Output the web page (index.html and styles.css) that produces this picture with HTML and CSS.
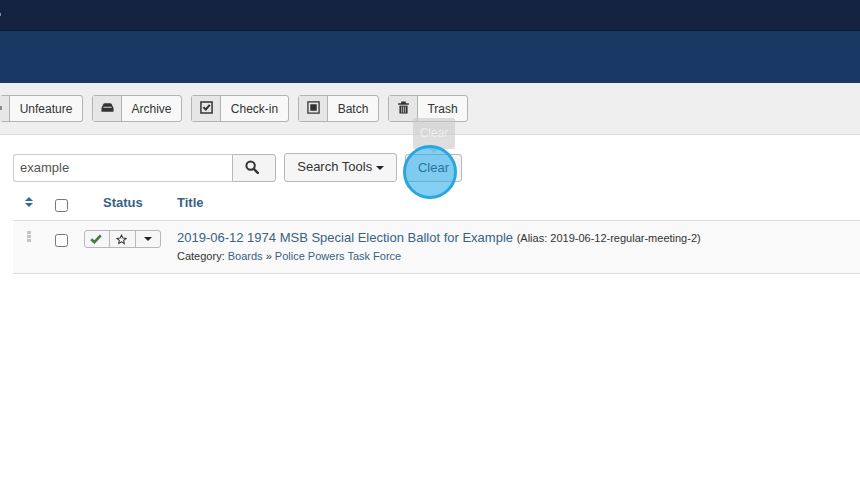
FILE: index.html
```html
<!DOCTYPE html>
<html lang="en">
<head>
<meta charset="utf-8">
<title>Articles</title>
<link rel="stylesheet" href="styles.css">
</head>
<body>
<div class="topbar"><span class="topbar-mark"></span></div>
<div class="header"></div>
<div class="toolbar">
  <div class="btn btn-first"><span class="btn-icon btn-icon-cut"><span class="cut-glyph"></span></span><span class="btn-text">Unfeature</span></div>
  <div class="btn btn-archive"><span class="btn-icon"><svg width="14" height="14" viewBox="0 0 14 14"><path d="M4 2.500h6q1 0 1.500 1L13.500 7.500V11.500H.5V7.500L2.500 3.500q.5-1 1.500-1z" fill="#333"/><path d="M2.800 6.300h8.400l.5 1.100H2.300z" fill="#d8d8d8"/></svg></span><span class="btn-text">Archive</span></div>
  <div class="btn btn-checkin"><span class="btn-icon"><svg width="14" height="14" viewBox="0 0 14 14"><path d="M1 1h12v12H1z" fill="none" stroke="#333" stroke-width="1.600"/><path d="M3.600 6.600l2.600 2.600 4.400-5" fill="none" stroke="#333" stroke-width="2.200"/></svg></span><span class="btn-text">Check-in</span></div>
  <div class="btn btn-batch"><span class="btn-icon"><svg width="14" height="14" viewBox="0 0 14 14"><path d="M1 1h12v12H1z" fill="none" stroke="#333" stroke-width="1.400"/><path d="M3.500 3.500h7v7h-7z" fill="#333"/></svg></span><span class="btn-text">Batch</span></div>
  <div class="btn btn-trash"><span class="btn-icon"><svg width="14" height="14" viewBox="0 0 14 14"><path d="M1.200 2.500h11.600v1.500H1.200zM4.500 .5h5v2h-5z" fill="#333"/><path d="M2.600 5h8.800v8.500H2.600z" fill="#333"/><path d="M5 6v6.500M7 6v6.500M9 6v6.500" stroke="#c8c8c8" stroke-width=".9"/></svg></span><span class="btn-text">Trash</span></div>
</div>
<main class="content">
  <div class="filters">
    <div class="search"><span class="search-input">example</span><span class="search-btn"><svg width="14" height="14" viewBox="0 0 14 14"><circle cx="5.600" cy="5.600" r="4.200" fill="none" stroke="#333" stroke-width="2"/><path d="M8.800 8.800l4 4" stroke="#333" stroke-width="2.400" stroke-linecap="round"/></svg></span></div>
    <div class="plain-btn tools">Search Tools <span class="caret"></span></div>
    <div class="plain-btn clear">Clear</div>
  </div>
  <div class="row head">
    <div class="col-sort"><svg width="8" height="10" viewBox="0 0 8 10"><path d="M4 0l4 4H0zM0 6h8l-4 4z" fill="#2f6a9c"/></svg></div>
    <div class="col-check"><span class="check"></span></div>
    <div class="col-status th">Status</div>
    <div class="col-title th">Title</div>
  </div>
  <div class="row item">
    <div class="col-sort"><span class="grip"></span></div>
    <div class="col-check"><span class="check"></span></div>
    <div class="col-status">
      <div class="status-group">
        <span class="sg sg-a"><svg width="12" height="10" viewBox="0 0 12 10"><path d="M1.200 5.200l3.200 3 6.400-6.800" fill="none" stroke="#3f7d3f" stroke-width="2.600"/></svg></span>
        <span class="sg sg-b"><svg width="11" height="11" viewBox="0 0 12 12"><path d="M6 1.200l1.500 3.200 3.400.4-2.500 2.300.7 3.400L6 8.500l-3.100 1.900.7-3.400L1.100 4.800l3.400-.4z" fill="none" stroke="#333" stroke-width="1.100"/></svg></span>
        <span class="sg sg-c"><span class="caret"></span></span>
      </div>
    </div>
    <div class="col-title">
      <div class="title-line"><a class="link">2019-06-12 1974 MSB Special Election Ballot for Example</a> <span class="alias">(Alias: 2019-06-12-regular-meeting-2)</span></div>
      <div class="cat-line">Category: <a class="link">Boards</a> » <a class="link">Police Powers Task Force</a></div>
    </div>
  </div>
</main>
<div class="tooltip">Clear</div>
<div class="spot"></div>
</body>
</html>
```
FILE: styles.css
```css
* { box-sizing: border-box; }
html, body { margin: 0; padding: 0; }
body { width: 860px; height: 480px; overflow: hidden; background: #fff; font-family: "Liberation Sans", Arial, sans-serif; font-size: 12px; color: #333; position: relative; }
.topbar { height: 31px; padding-top: 13px; background: #13233f; border-bottom: 1px solid #0c1a30; }
.topbar-mark { display: block; width: 1px; height: 3px; background: #7f8da3; }
.header { height: 52px; background: #193864; }
.toolbar { height: 52px; background: #efefef; border-bottom: 1px solid #dcdcdc; display: flex; align-items: flex-start; padding-top: 12px; }
.btn { height: 27px; display: flex; background: #f8f8f8; border: 1px solid #b3b3b3; border-radius: 3px; flex: none; }
.btn-icon { width: 29px; background: #e6e6e6; border-right: 1px solid #b3b3b3; display: flex; align-items: center; justify-content: center; padding-bottom: 2px; }
.btn-icon svg { width: 13px; height: 13px; }
.btn-icon-cut { width: 10px; justify-content: flex-start; }
.cut-glyph { width: 2px; height: 4px; background: #8c8c8c; }
.btn-text { flex: 1; text-align: center; line-height: 26px; font-size: 12px; color: #333; }
.btn-first { width: 83px; margin-right: 9px; border-left: 0; }
.btn-archive { width: 90px; margin-right: 9px; }
.btn-checkin { width: 98px; margin-right: 9px; }
.btn-batch { width: 81px; margin-right: 9px; }
.btn-trash { width: 80px; }
.content { padding-left: 13px; }
.filters { display: flex; padding-top: 19px; height: 52px; }
.search { display: flex; width: 263px; height: 28px; }
.search-input { width: 219px; border: 1px solid #ccc; border-right: 0; border-radius: 3px 0 0 3px; padding-left: 6px; font-size: 13px; line-height: 26px; color: #555; }
.search-btn { width: 44px; background: #f4f4f4; border: 1px solid #b8b8b8; border-radius: 0 3px 3px 0; display: flex; align-items: center; justify-content: center; padding: 0 4px 3px 0; }
.plain-btn { height: 28px; border: 1px solid #b8b8b8; border-radius: 3px; background: #f6f6f6; text-align: center; font-size: 13px; line-height: 25px; color: #333; }
.tools { width: 113px; height: 29px; margin: -1px 0 0 8px; }
.clear { width: 57px; margin-left: 8px; background: #f4f4f4; }
.caret { display: inline-block; width: 0; height: 0; border-left: 4px solid transparent; border-right: 4px solid transparent; border-top: 4px solid #222; vertical-align: middle; }
.row { display: flex; width: 847px; }
.head { height: 34px; border-bottom: 1px solid #ddd; }
.item { height: 53px; background: #f9f9f9; border-bottom: 1px solid #ddd; }
.col-sort { width: 31px; padding-left: 11px; }
.col-check { width: 40px; padding-left: 11px; }
.col-status { width: 93px; }
.col-title { flex: 1; }
.head .col-sort { padding: 9px 0 0 12px; }
.head .col-check { padding-top: 12px; }
.th { font-size: 13px; font-weight: bold; color: #376286; padding-top: 8px; }
.head .col-status { padding-left: 19px; }
.check { display: block; width: 13px; height: 13px; border: 1px solid #767676; border-radius: 2.5px; background: #fff; }
.item .col-sort { padding-top: 10px; padding-left: 14px; }
.item .col-check { padding-top: 13px; }
.item .col-status { padding-top: 9px; }
.grip { display: block; width: 4px; height: 11px; background: repeating-linear-gradient(#c4c4c4 0 3px, transparent 3px 4px); }
.status-group { display: flex; width: 77px; height: 18px; border: 1px solid #b8b8b8; border-radius: 3px; background: #f6f6f6; }
.sg { display: flex; align-items: center; justify-content: center; border-right: 1px solid #b8b8b8; }
.sg-a { width: 25px; padding-right: 2px; }
.sg-b { width: 26px; padding-right: 3px; }
.sg-c { flex: 1; border-right: 0; }
.item .col-title { padding-top: 9px; }
.title-line { font-size: 13px; line-height: 16px; color: #333; }
.link { color: #376286; }
.alias { font-size: 11px; color: #333; }
.cat-line { font-size: 11px; line-height: 14px; margin-top: 3px; color: #333; }
.tooltip { position: absolute; left: 413px; top: 118px; width: 42px; height: 31px; border-radius: 2px; background: rgba(200,200,200,.6); color: #eee; font-size: 12px; line-height: 30px; text-align: center; }
.tooltip::after { content: ""; position: absolute; left: 16px; top: 31px; border-left: 5px solid transparent; border-right: 5px solid transparent; border-top: 4px solid rgba(200,200,200,.6); }
.spot { position: absolute; left: 403px; top: 145px; width: 54px; height: 54px; border-radius: 50%; background: rgba(30,170,235,.55); border: 3px solid #2aa6dc; }
```
